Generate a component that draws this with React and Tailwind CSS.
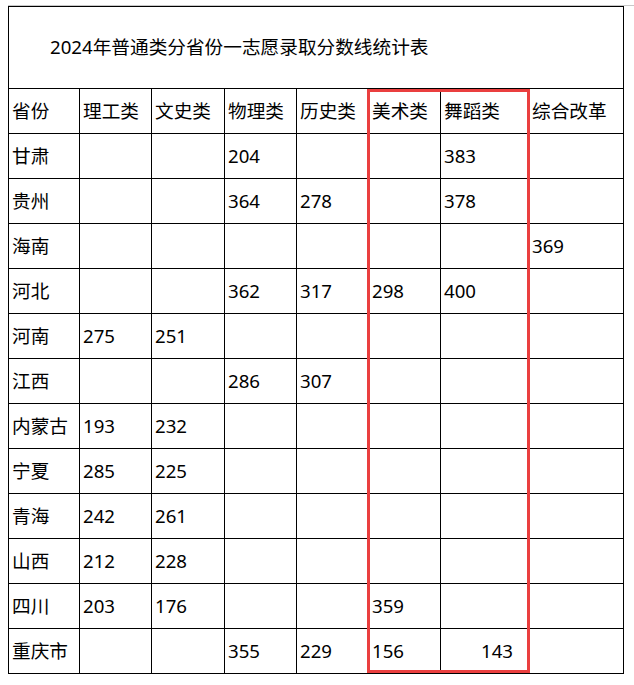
import React from 'react';

const headers = ['省份', '理工类', '文史类', '物理类', '历史类', '美术类', '舞蹈类', '综合改革'];
const widths = ['w-[71px]', 'w-[72px]', 'w-[73px]', 'w-[72px]', 'w-[72px]', 'w-[72px]', 'w-[88px]', 'w-[95px]'];

const rows = [
  ['甘肃', '', '', '204', '', '', '383', ''],
  ['贵州', '', '', '364', '278', '', '378', ''],
  ['海南', '', '', '', '', '', '', '369'],
  ['河北', '', '', '362', '317', '298', '400', ''],
  ['河南', '275', '251', '', '', '', '', ''],
  ['江西', '', '', '286', '307', '', '', ''],
  ['内蒙古', '193', '232', '', '', '', '', ''],
  ['宁夏', '285', '225', '', '', '', '', ''],
  ['青海', '242', '261', '', '', '', '', ''],
  ['山西', '212', '228', '', '', '', '', ''],
  ['四川', '203', '176', '', '', '359', '', ''],
  ['重庆市', '', '', '355', '229', '156', '143', ''],
];

const cell = 'border border-black pl-[3px] align-middle whitespace-nowrap';

const App = () => {
  return (
    <div className="w-[634px] h-[685px] bg-white pt-[5px] pl-[8px] text-black font-['Noto_Sans','Noto_Sans_CJK_SC',sans-serif] text-[18.67px] leading-none">
      {/* thin gray rule above the table */}
      <div className="h-px w-[626px] bg-[#c8c8c8]" />
      <div className="relative w-[616px]">
        <table className="border-collapse table-fixed w-[616px]">
          <colgroup>
            {widths.map((w, i) => (
              <col key={i} className={w} />
            ))}
          </colgroup>
          <tbody>
            <tr className="h-[82px]">
              <td colSpan={8} className="border border-black pl-[41px] align-middle">
                2024年普通类分省份一志愿录取分数线统计表
              </td>
            </tr>
            <tr className="h-[45px]">
              {headers.map((h, i) => (
                <td key={i} className={cell}>{h}</td>
              ))}
            </tr>
            {rows.map((r, ri) => (
              <tr key={ri} className="h-[45px]">
                {r.map((v, ci) => {
                  const rightAlign = ri === rows.length - 1 && ci === 6;
                  return (
                    <td key={ci} className={rightAlign ? 'border border-black align-middle text-right pr-[15px]' : cell}>
                      {v}
                    </td>
                  );
                })}
              </tr>
            ))}
          </tbody>
        </table>
        {/* red highlight box over 美术类 / 舞蹈类 */}
        <div className="absolute left-[359px] top-[83px] w-[163px] h-[584px] border-[3px] border-[#ea3f3f] pointer-events-none" />
      </div>
    </div>
  );
};

export default App;
